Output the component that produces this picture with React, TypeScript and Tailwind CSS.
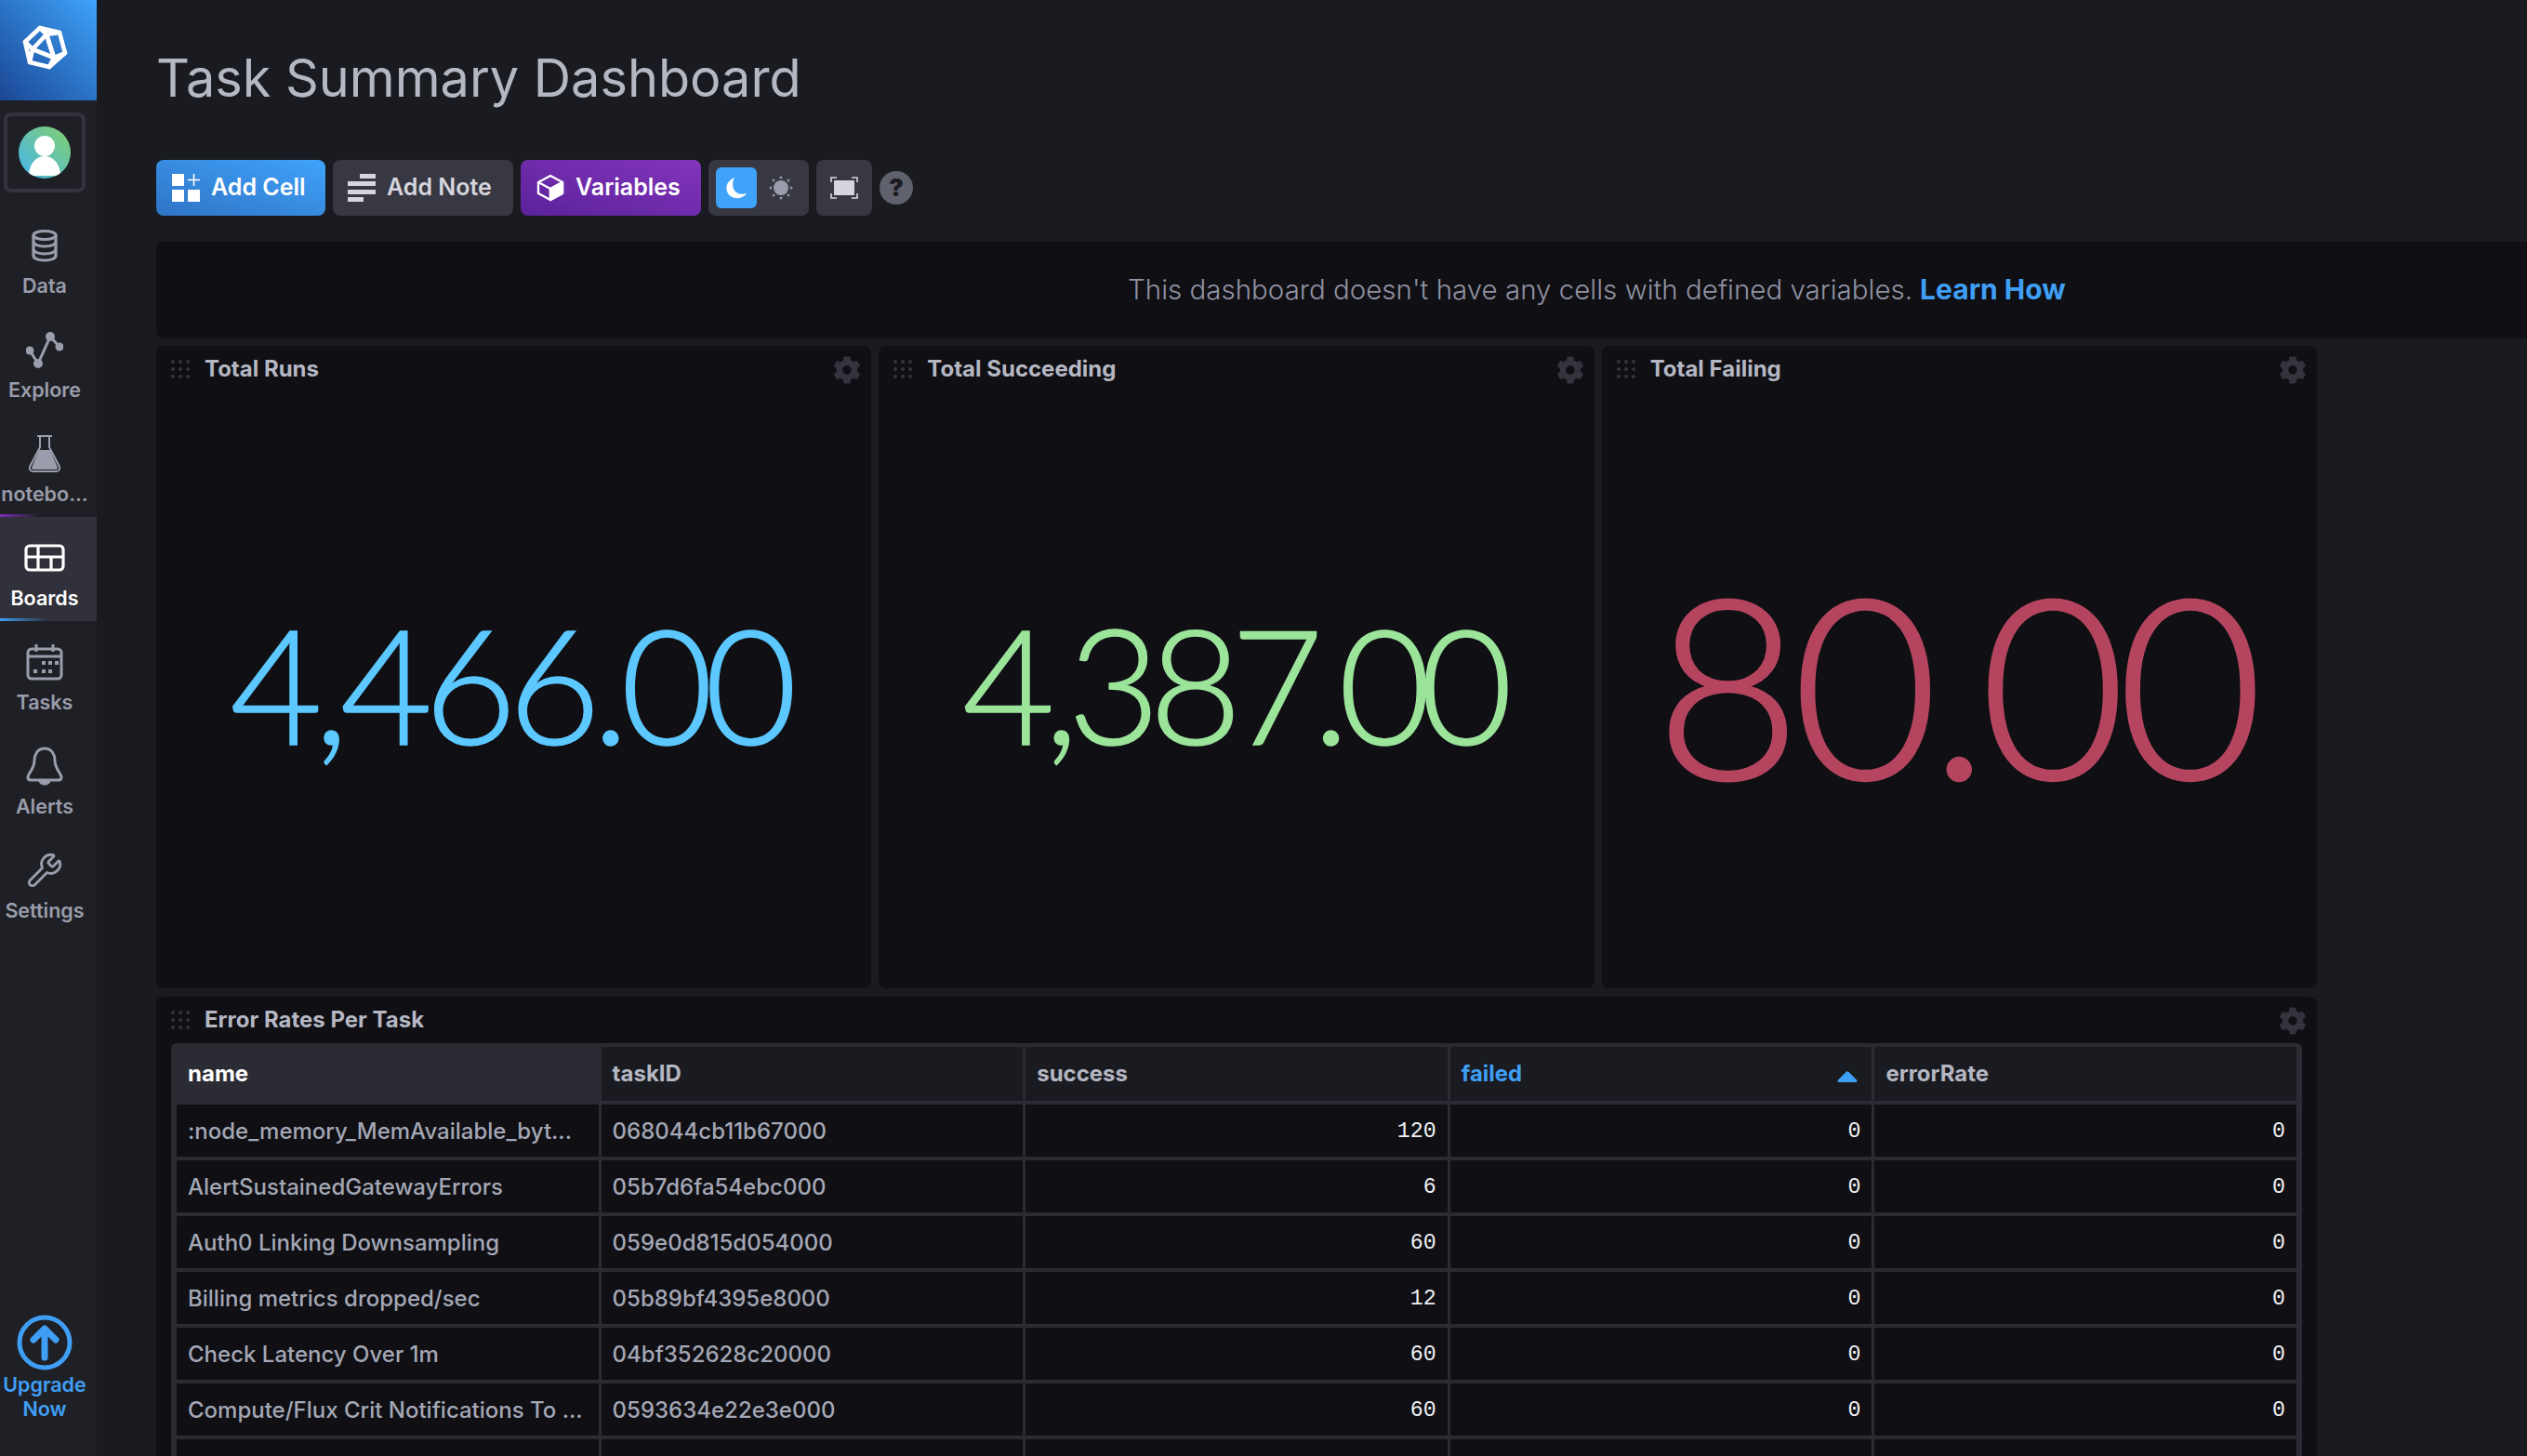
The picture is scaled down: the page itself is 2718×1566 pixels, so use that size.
import type { ReactNode } from "react";
import { Wrench } from "lucide-react";
import { FaCog } from "react-icons/fa";

const GREY = "#9a9dab";

function Logo() {
  return (
    <svg width="104" height="108" viewBox="0 0 104 108" fill="none" stroke="#fff" strokeWidth="4.6" strokeLinejoin="round" strokeLinecap="round">
      <path d="M43 30 L64 35 L70 57 L53 72 L32 67 L27 45 Z" />
      <path d="M50 37 L35 53 L58 62 Z" />
      <path d="M43 30 L50 37 L64 35 M27 45 L35 53 L32 67 M53 72 L58 62 L70 57 M50 37 L58 62" />
    </svg>
  );
}

function Avatar() {
  return (
    <svg width="56" height="56" viewBox="0 0 56 56">
      <defs>
        <linearGradient id="avatar" x1="0" y1="1" x2="1" y2="0">
          <stop offset="0" stopColor="#45b4ef" />
          <stop offset="1" stopColor="#84d06c" />
        </linearGradient>
        <clipPath id="avatarClip">
          <circle cx="28" cy="28" r="28" />
        </clipPath>
      </defs>
      <circle cx="28" cy="28" r="28" fill="url(#avatar)" />
      <g clipPath="url(#avatarClip)" fill="#fff">
        <circle cx="28" cy="21" r="11" />
        <path d="M11 53 C11 40 19 32 28 32 C37 32 45 40 45 53 Z" />
      </g>
    </svg>
  );
}

function DataIcon() {
  return (
    <svg width="40" height="40" viewBox="0 0 40 40" fill="none" stroke={GREY} strokeWidth="3.2">
      <ellipse cx="20" cy="9" rx="12" ry="4.5" />
      <path d="M8 9 V31 C8 34 13 36 20 36 C27 36 32 34 32 31 V9" />
      <path d="M8 16 C8 19 13 21 20 21 C27 21 32 19 32 16 M8 24 C8 27 13 29 20 29 C27 29 32 27 32 24" />
    </svg>
  );
}

function ExploreIcon() {
  return (
    <svg width="40" height="40" viewBox="0 0 40 40" fill="none" stroke={GREY} strokeWidth="3">
      <path d="M4 21 L13 35 L26 6 L36 17" />
      <g fill={GREY} stroke="none">
        <circle cx="4" cy="21" r="4.5" />
        <circle cx="13" cy="35" r="5" />
        <circle cx="26" cy="6" r="5" />
        <circle cx="36" cy="17" r="4.5" />
      </g>
    </svg>
  );
}

function FlaskIcon() {
  return (
    <svg width="40" height="42" viewBox="0 0 40 42">
      <path d="M12 2 H28 M15 2 V14 L4 35 C3 38 5 40 8 40 H32 C35 40 37 38 36 35 L25 14 V2" fill="none" stroke={GREY} strokeWidth="2" />
      <path d="M14 17 H26 L34 36 C34 37 33 38 32 38 H8 C7 38 6 37 6 36 Z" fill={GREY} />
    </svg>
  );
}

function BoardsIcon() {
  return (
    <svg width="44" height="32" viewBox="0 0 44 32" fill="none" stroke="#fff" strokeWidth="3.2">
      <rect x="2" y="3" width="40" height="26" rx="4" />
      <path d="M2 15 H42 M15 3 V29 M29 15 V29" />
    </svg>
  );
}

function TasksIcon() {
  return (
    <svg width="42" height="40" viewBox="0 0 42 40" fill="none" stroke={GREY} strokeWidth="3">
      <rect x="3" y="6" width="36" height="32" rx="4" />
      <path d="M3 14 H39 M12 1 V9 M30 1 V9" />
      <g fill={GREY} stroke="none">
        <rect x="18" y="19" width="4" height="4" />
        <rect x="25" y="19" width="4" height="4" />
        <rect x="32" y="19" width="4" height="4" />
        <rect x="9" y="28" width="4" height="4" />
        <rect x="18" y="28" width="4" height="4" />
        <rect x="25" y="28" width="4" height="4" />
      </g>
    </svg>
  );
}

function BellIcon() {
  return (
    <svg width="40" height="42" viewBox="0 0 40 42" fill="none" stroke={GREY} strokeWidth="3" strokeLinejoin="round">
      <path d="M20 2 C12 2 9 9 9 15 C9 24 2 29 2 33 C2 35 3 36 5 36 H35 C37 36 38 35 38 33 C38 29 31 24 31 15 C31 9 28 2 20 2 Z" />
      <path d="M15 37 C16 41 24 41 25 37 Z" fill={GREY} />
    </svg>
  );
}

function UpgradeIcon() {
  return (
    <svg width="60" height="60" viewBox="0 0 60 60" fill="none" stroke="#3f9ff5">
      <circle cx="30" cy="30" r="27" strokeWidth="5" />
      <path d="M30 46 V16 M18 27 L30 15 L42 27" strokeWidth="7" strokeLinecap="round" strokeLinejoin="round" />
    </svg>
  );
}

function AddCellIcon() {
  return (
    <svg width="30" height="30" viewBox="0 0 30 30" fill="#fff">
      <rect x="0" y="0" width="13" height="13" />
      <rect x="0" y="17" width="13" height="13" />
      <rect x="17" y="17" width="13" height="13" />
      <path d="M22.7 0 H24.3 V5.7 H30 V7.3 H24.3 V13 H22.7 V7.3 H17 V5.7 H22.7 Z" />
    </svg>
  );
}

function AddNoteIcon() {
  return (
    <svg width="30" height="30" viewBox="0 0 30 30" fill="#d5d6dd">
      <rect x="13" y="0" width="17" height="5" />
      <rect x="0" y="8" width="30" height="5" />
      <rect x="0" y="17" width="30" height="5" />
      <rect x="0" y="25" width="17" height="5" />
    </svg>
  );
}

function CubeIcon() {
  return (
    <svg width="30" height="30" viewBox="0 0 30 30" fill="none" stroke="#fff" strokeWidth="2.4" strokeLinejoin="round">
      <path d="M15 2 L28 9 V21 L15 28 L2 21 V9 Z" />
      <path d="M2 9 L15 16 L28 9 M15 16 V28" />
      <path d="M15 16 L28 9 V21 L15 28 Z" fill="#fff" />
    </svg>
  );
}

function MoonIcon() {
  return (
    <svg width="24" height="24" viewBox="0 0 24 24" fill="#fff">
      <path d="M10 1 C3 4 0 10 2 16 C4 22 12 25 18 22 C20 21 22 20 23 18 C17 20 11 18 9 13 C7.6 9 8 5 10 1 Z" />
    </svg>
  );
}

function SunIcon() {
  return (
    <svg width="26" height="26" viewBox="0 0 26 26" fill="#9a9dab">
      <circle cx="13" cy="13" r="8" />
      <path d="M13 0 L15 3 H11 Z M13 26 L11 23 H15 Z M0 13 L3 11 V15 Z M26 13 L23 15 V11 Z M3.5 3.5 L7 4.5 L4.5 7 Z M22.5 3.5 L21.5 7 L19 4.5 Z M3.5 22.5 L4.5 19 L7 21.5 Z M22.5 22.5 L19 21.5 L21.5 19 Z" />
    </svg>
  );
}

function FullscreenIcon() {
  return (
    <svg width="30" height="24" viewBox="0 0 30 24" fill="none" stroke="#d5d6dd" strokeWidth="1.6">
      <rect x="4" y="4" width="22" height="16" fill="#d5d6dd" stroke="none" rx="1" />
      <path d="M1 6 V1 H7 M23 1 H29 V6 M1 18 V23 H7 M23 23 H29 V18" />
    </svg>
  );
}

function DragDots() {
  return (
    <svg width="20" height="20" viewBox="0 0 20 20" fill="#33343d">
      {[2, 10, 18].map((cy) =>
        [2, 10, 18].map((cx) => <circle key={`${cx}-${cy}`} cx={cx} cy={cy} r="2" />)
      )}
    </svg>
  );
}

function SortArrow() {
  return (
    <svg width="22" height="12" viewBox="0 0 22 12" fill="#3f9ff5">
      <path d="M9.5 1 C10.3 0 11.7 0 12.5 1 L21 9.5 C22 11 21.5 12 20 12 H2 C0.5 12 0 11 1 9.5 Z" />
    </svg>
  );
}

function NavItem({ icon, label, active, bar }: { icon: ReactNode; label: string; active?: boolean; bar?: string }) {
  return (
    <div className={`flex h-[112px] flex-col ${active ? "bg-[#30313a] text-white" : "text-[#9a9dab]"}`}>
      <div className="flex flex-1 flex-col items-center pt-[24px] pr-[8px]">
        <div className="flex h-[40px] items-center justify-center">{icon}</div>
        <div className="mt-[9px] h-[28px] whitespace-nowrap text-[21.5px] leading-[28px] font-semibold">{label}</div>
      </div>
      {bar && <div className={`h-[3px] w-full ${bar}`} />}
    </div>
  );
}

function Sidebar() {
  return (
    <aside className="flex h-full w-[104px] shrink-0 flex-col bg-[#1f2026]">
      <div className="h-[108px] bg-gradient-to-tr from-[#1b4795] to-[#40a3fa]">
        <Logo />
      </div>
      <div className="mt-[13px] mb-[13px] ml-[4px] flex h-[86px] w-[88px] items-center justify-center rounded-[8px] border-4 border-[#33343d]">
        <Avatar />
      </div>
      <NavItem icon={<DataIcon />} label="Data" />
      <NavItem icon={<ExploreIcon />} label="Explore" />
      <NavItem icon={<FlaskIcon />} label="notebo..." bar="bg-gradient-to-r from-[#7b2fbb] to-transparent to-40%" />
      <NavItem icon={<BoardsIcon />} label="Boards" active bar="bg-gradient-to-r from-[#3f9ff5] to-transparent to-50%" />
      <NavItem icon={<TasksIcon />} label="Tasks" />
      <NavItem icon={<BellIcon />} label="Alerts" />
      <NavItem icon={<Wrench size={40} color={GREY} strokeWidth={1.7} />} label="Settings" />
      <div className="mt-auto mb-[38px] flex flex-col items-center pr-[8px] text-[#3f9ff5]">
        <UpgradeIcon />
        <div className="mt-[2px] text-center text-[21.5px] leading-[26px] font-semibold">
          Upgrade
          <br />
          Now
        </div>
      </div>
    </aside>
  );
}

function Toolbar() {
  const btn = "flex h-[60px] items-center rounded-[8px]";
  return (
    <div className="mt-[54px] flex items-center gap-2">
      <div className={`${btn} w-[182px] gap-3 bg-gradient-to-tr from-[#2f74c6] to-[#40a3fa] pl-[17px] text-[25px] font-semibold text-white`}>
        <AddCellIcon />
        <span>Add Cell</span>
      </div>
      <div className={`${btn} w-[194px] gap-3 bg-[#383843] pl-[16px] text-[25px] font-semibold text-[#d5d6dd]`}>
        <AddNoteIcon />
        <span>Add Note</span>
      </div>
      <div className={`${btn} w-[194px] gap-3 bg-gradient-to-tr from-[#5b229b] to-[#8334bb] pl-[17px] text-[25px] font-semibold text-white`}>
        <CubeIcon />
        <span>Variables</span>
      </div>
      <div className={`${btn} w-[108px] bg-[#383843] pl-2`}>
        <div className="flex h-[44px] w-[44px] items-center justify-center rounded-[6px] bg-[#40a3fa]">
          <MoonIcon />
        </div>
        <div className="ml-[13px]">
          <SunIcon />
        </div>
      </div>
      <div className={`${btn} w-[60px] justify-center bg-[#383843]`}>
        <FullscreenIcon />
      </div>
      <div className="flex h-[36px] w-[36px] items-center justify-center rounded-full bg-[#5f616c] text-[26px] leading-none font-black text-[#1a1b20]">
        ?
      </div>
    </div>
  );
}

function CellHeader({ title }: { title: string }) {
  return (
    <div className="flex h-[50px] shrink-0 items-center pr-[11px] pl-[16px]">
      <DragDots />
      <span className="ml-[16px] text-[24px] font-bold text-[#b5b7c3]">{title}</span>
      <FaCog size={30} color="#33343d" className="mt-[2px] ml-auto" />
    </div>
  );
}

function StatCell({ title, value, color, size }: { title: string; value: string; color: string; size: string }) {
  return (
    <div className="flex h-[691px] flex-col rounded-[8px] bg-[#0f0f14]">
      <CellHeader title={title} />
      <div className={`flex flex-1 items-center justify-center pb-[16px] font-[Lato] font-light ${size} ${color}`}>
        {value}
      </div>
    </div>
  );
}

const ROWS = [
  [":node_memory_MemAvailable_byt...", "068044cb11b67000", "120"],
  ["AlertSustainedGatewayErrors", "05b7d6fa54ebc000", "6"],
  ["Auth0 Linking Downsampling", "059e0d815d054000", "60"],
  ["Billing metrics dropped/sec", "05b89bf4395e8000", "12"],
  ["Check Latency Over 1m", "04bf352628c20000", "60"],
  ["Compute/Flux Crit Notifications To ...", "0593634e22e3e000", "60"],
];

function Td({ children, mono }: { children?: ReactNode; mono?: boolean }) {
  return (
    <div
      className={`flex h-[56px] items-center overflow-hidden bg-[#0f0f14] pt-[2px] whitespace-nowrap ${
        mono
          ? "justify-end pr-[12px] font-['Liberation_Mono',monospace] text-[23.3px] text-[#f1f1f3]"
          : "pl-[12px] text-[24px] font-medium text-[#a4a7b5]"
      }`}
    >
      {children}
    </div>
  );
}

function ErrorTable() {
  const th = "flex h-[58px] items-center pl-[12px] text-[24px] font-bold";
  return (
    <div className="mx-[16px] rounded-[6px] bg-[#2b2c33] px-[6px] pt-[4px]">
      <div className="grid grid-cols-5 gap-x-[3px] gap-y-[4px]">
        <div className={`${th} bg-[#2b2c33] text-white`}>name</div>
        <div className={`${th} bg-[#1a1b20] text-[#b5b7c3]`}>taskID</div>
        <div className={`${th} bg-[#1a1b20] text-[#b5b7c3]`}>success</div>
        <div className={`${th} justify-between bg-[#1a1b20] pr-[15px] text-[#3f9ff5]`}>
          <span>failed</span>
          <span className="mt-[6px]">
            <SortArrow />
          </span>
        </div>
        <div className={`${th} bg-[#1a1b20] text-[#b5b7c3]`}>errorRate</div>
        {ROWS.map((row) => (
          <div key={row[1]} className="contents">
            <Td>{row[0]}</Td>
            <Td>{row[1]}</Td>
            <Td mono>{row[2]}</Td>
            <Td mono>0</Td>
            <Td mono>0</Td>
          </div>
        ))}
        {[0, 1, 2, 3, 4].map((i) => (
          <Td key={i} />
        ))}
      </div>
    </div>
  );
}

export default function App() {
  return (
    <div className="flex h-[1566px] w-[2718px] overflow-hidden bg-[#1a1b20] font-[Inter,sans-serif]">
      <Sidebar />
      <main className="min-w-0 flex-1 pl-[64px]">
        <h1 className="mt-[50px] text-[55.8px] leading-[68px] font-normal text-[#b5b7c3]">Task Summary Dashboard</h1>
        <Toolbar />
        <div className="mt-[28px] flex h-[104px] items-center rounded-l-[8px] bg-[#0f0f14] pb-[2px] pl-[1045px] text-[29.5px] font-light whitespace-nowrap text-[#8f92a1]">
          <span>This dashboard doesn't have any cells with defined variables.</span>
          <span className="ml-[8px] text-[30px] font-bold text-[#3f9ff5]">Learn How</span>
        </div>
        <div className="mt-[8px] w-[2324px]">
          <div className="grid grid-cols-3 gap-2">
            <StatCell title="Total Runs" value="4,466.00" color="text-[#5cc8ff]" size="pr-[10px] text-[172px] tracking-[-0.055em] [-webkit-text-stroke:1.5px]" />
            <StatCell title="Total Succeeding" value="4,387.00" color="text-[#9be49a]" size="pr-[10px] text-[172px] tracking-[-0.07em] [-webkit-text-stroke:1.5px]" />
            <StatCell title="Total Failing" value="80.00" color="text-[#b5455f]" size="pr-[9px] text-[270px] tracking-[-0.033em] [-webkit-text-stroke:2.5px]" />
          </div>
          <div className="mt-[9px] h-[600px] rounded-[8px] bg-[#0f0f14]">
            <CellHeader title="Error Rates Per Task" />
            <ErrorTable />
          </div>
        </div>
      </main>
    </div>
  );
}
